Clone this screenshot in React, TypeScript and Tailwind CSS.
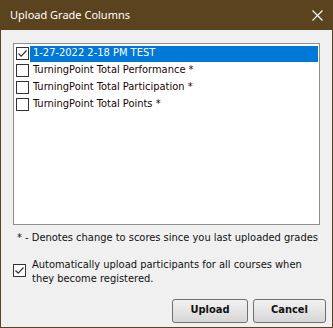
import React from 'react'

const items = [
  { label: '1-27-2022 2-18 PM TEST', checked: true, selected: true },
  { label: 'TurningPoint Total Performance *', checked: false, selected: false },
  { label: 'TurningPoint Total Participation *', checked: false, selected: false },
  { label: 'TurningPoint Total Points *', checked: false, selected: false },
]

function Box({ checked }: { checked: boolean }) {
  return (
    <div className="w-[13px] h-[13px] border border-[#333] bg-white flex items-center justify-center shrink-0">
      {checked && (
        <svg width="11" height="11" viewBox="0 0 11 11">
          <path d="M1.5 5.5 L4.2 8.2 L9.5 2.5" fill="none" stroke="#333" strokeWidth="1.2" />
        </svg>
      )}
    </div>
  )
}

export default function App() {
  const font = { fontFamily: '"DejaVu Sans Condensed", "DejaVu Sans", sans-serif' }
  const btn = "h-[24px] rounded-[3px] border border-[#707070] bg-gradient-to-b from-[#f2f2f2] to-[#d6d6d6] text-[11px] font-bold text-[#111]"

  return (
    <div className="w-[333px] h-[328px] overflow-hidden bg-[#5b4320] flex flex-col" style={font}>
      <div className="h-[30px] shrink-0 flex items-center justify-between pl-[10px] pr-[10px] text-white">
        <span className="text-[11px]" style={{ fontFamily: '"Noto Sans", "Open Sans", sans-serif' }}>Upload Grade Columns</span>
        <svg width="11" height="11" viewBox="0 0 11 11">
          <path d="M0.5 0.5 L10.5 10.5 M10.5 0.5 L0.5 10.5" stroke="white" strokeWidth="1.1" />
        </svg>
      </div>
      <div className="flex-1 mx-[1px] mb-[1px] bg-[#f0f0f0] flex flex-col px-[12px] pt-[13px]">
        <div className="h-[182px] shrink-0 border border-[#8f8f8f] bg-white pt-[1px] pl-[2px] pr-[1px]">
          {items.map((it, i) => (
            <div key={i} className="h-[17px] flex items-center">
              <Box checked={it.checked} />
              <span
                className={
                  'ml-[1px] h-[16px] flex items-center pl-[3px] text-[11px] ' +
                  (it.selected ? 'flex-1 bg-[#0078d7] text-white' : 'text-[#1a0505]')
                }
              >
                {it.label}
              </span>
            </div>
          ))}
        </div>
        <div className="mt-[5px] pl-[4px] text-[11px] text-[#111] whitespace-nowrap">
          * - Denotes change to scores since you last uploaded grades
        </div>
        <div className="mt-[11px] flex items-start gap-[6px]">
          <div className="mt-[6px]">
            <Box checked={true} />
          </div>
          <div className="text-[11px] leading-[14px] text-[#111] whitespace-nowrap">
            Automatically upload participants for all courses when
            <br />
            they become registered.
          </div>
        </div>
        <div className="mt-[13px] flex justify-end gap-[5px] mr-[-6px]">
          <button className={btn + ' w-[76px]'}>Upload</button>
          <button className={btn + ' w-[73px]'}>Cancel</button>
        </div>
      </div>
    </div>
  )
}
